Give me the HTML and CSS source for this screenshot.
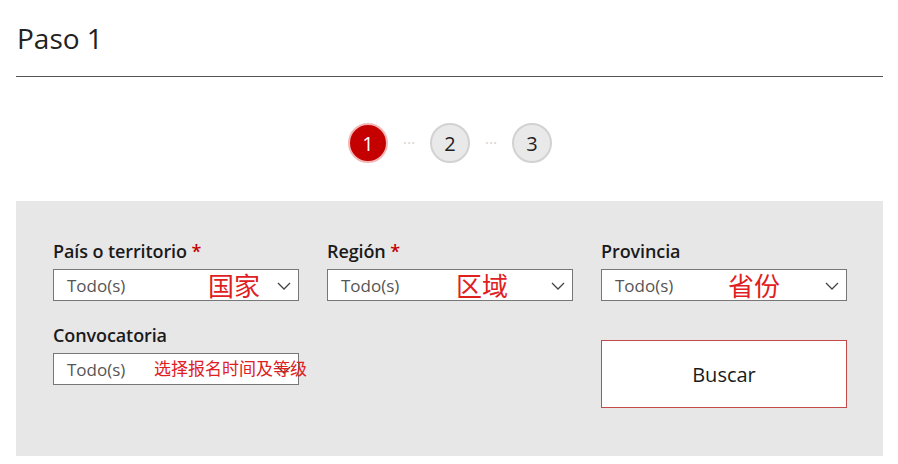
FILE: index.html
```html
<!DOCTYPE html>
<html lang="es">
<head>
<meta charset="utf-8">
<link rel="stylesheet" href="styles.css">
</head>
<body>
<div class="page">
  <h1 class="title">Paso 1</h1>
  <hr class="rule">
  <div class="steps">
    <span class="step active">1</span>
    <span class="dots">···</span>
    <span class="step">2</span>
    <span class="dots">···</span>
    <span class="step">3</span>
  </div>
  <div class="panel">
    <div class="grid">
      <div class="field">
        <label class="label">País o territorio <span class="req">*</span></label>
        <div class="select"><span class="ph">Todo(s)</span><svg class="chev" width="14" height="8" viewBox="0 0 14 8"><path d="M1 1 L7 7 L13 1" fill="none" stroke="#444" stroke-width="1.3"/></svg><span class="note big n1">国家</span></div>
      </div>
      <div class="field">
        <label class="label">Región <span class="req">*</span></label>
        <div class="select"><span class="ph">Todo(s)</span><svg class="chev" width="14" height="8" viewBox="0 0 14 8"><path d="M1 1 L7 7 L13 1" fill="none" stroke="#444" stroke-width="1.3"/></svg><span class="note big n2">区域</span></div>
      </div>
      <div class="field">
        <label class="label">Provincia</label>
        <div class="select"><span class="ph">Todo(s)</span><svg class="chev" width="14" height="8" viewBox="0 0 14 8"><path d="M1 1 L7 7 L13 1" fill="none" stroke="#444" stroke-width="1.3"/></svg><span class="note big n3">省份</span></div>
      </div>
      <div class="field">
        <label class="label">Convocatoria</label>
        <div class="select"><span class="ph">Todo(s)</span><svg class="chev" width="14" height="8" viewBox="0 0 14 8"><path d="M1 1 L7 7 L13 1" fill="none" stroke="#444" stroke-width="1.3"/></svg><span class="note small n4">选择报名时间及等级</span></div>
      </div>
      <div class="field"></div>
      <div class="field btncell">
        <button class="btn">Buscar</button>
      </div>
    </div>
  </div>
</div>
</body>
</html>
```
FILE: styles.css
```css
* { box-sizing: border-box; }
html, body { margin: 0; padding: 0; background: #fff; }
body {
  font-family: "Open Sans", "Noto Sans", sans-serif;
  color: #1a1a1a;
}
.page {
  width: 898px;
  padding: 0 15px 0 16px;
}
.title {
  margin: 0;
  padding: 19px 0 0 1px;
  font-size: 28px;
  font-weight: 400;
  line-height: 38px;
  color: #222;
}
.rule {
  margin: 19px 0 0 0;
  border: 0;
  border-top: 1px solid #555;
  height: 0;
}
.steps {
  display: flex;
  justify-content: center;
  align-items: center;
  gap: 4px;
  margin-top: 46px;
  height: 40px;
  padding-left: 1px;
}
.step {
  width: 40px;
  height: 40px;
  border-radius: 50%;
  display: flex;
  align-items: center;
  justify-content: center;
  font-size: 20px;
  color: #222;
  background: #e9e9e9;
  border: 2px solid #d2d2d2;
}
.step.active {
  background: #c40000;
  color: #fff;
  border: 2px solid #f2b8b8;
}
.dots {
  color: #d6d6d6;
  font-size: 16px;
  letter-spacing: 0;
  width: 34px;
  text-align: center;
  line-height: 1;
  font-weight: 400;
}
.panel {
  margin-top: 38px;
  background: #e8e7e8;
  height: 255px;
  padding: 37px 36px 0 37px;
}
.grid {
  display: grid;
  grid-template-columns: 246px 246px 246px;
  column-gap: 28px;
  row-gap: 21px;
}
.label {
  display: block;
  font-size: 18px;
  font-weight: 600;
  line-height: 26px;
  color: #1a1a1a;
  margin-bottom: 5px;
  letter-spacing: -0.1px;
}
.req { color: #c40000; }
.select {
  position: relative;
  height: 32px;
  background: #fff;
  border: 1px solid #777;
  display: flex;
  align-items: center;
  padding-left: 13px;
}
.ph {
  font-size: 17px;
  color: #555;
}
.chev {
  position: absolute;
  right: 7px;
  top: 12px;
}
.note {
  position: absolute;
  color: #e0201e;
  font-family: "Noto Sans CJK SC", sans-serif;
  white-space: nowrap;
  line-height: 1;
}
.note.big { font-size: 26px; top: 2px; }
.note.small { font-size: 17px; top: 5px; left: 100px; }
.n1 { left: 154px; }
.n2 { left: 128px; }
.n3 { left: 126px; }
.btncell {
  display: flex;
  align-items: flex-start;
  padding-top: 18px;
}
.btn {
  width: 247px;
  height: 68px;
  background: #fff;
  border: 1px solid #c24a4a;
  font-family: "Open Sans", "Noto Sans", sans-serif;
  font-size: 20px;
  color: #1a1a1a;
  cursor: pointer;
}
```
